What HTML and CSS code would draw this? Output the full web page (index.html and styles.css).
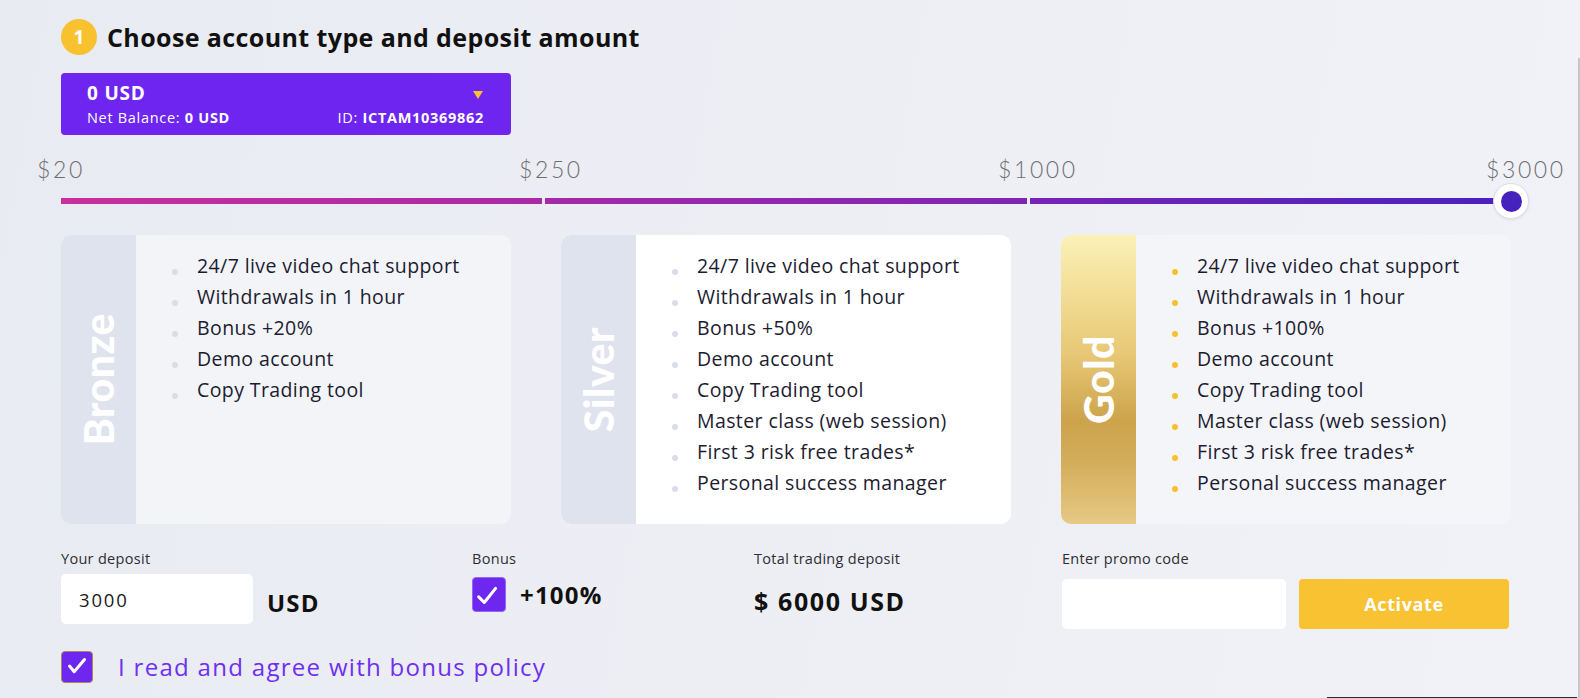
FILE: index.html
```html
<!DOCTYPE html>
<html lang="en">
<head>
<meta charset="utf-8">
<title>Choose account type and deposit amount</title>
<link rel="stylesheet" href="styles.css">
</head>
<body>
<div class="page">
  <div class="step">
    <span class="step-num">1</span>
    <h1 class="step-title">Choose account type and deposit amount</h1>
  </div>

  <div class="account">
    <div class="account-top">
      <span class="account-amount">0 USD</span>
      <span class="caret"></span>
    </div>
    <div class="account-bottom">
      <span>Net Balance: <b>0 USD</b></span>
      <span>ID: <b>ICTAM10369862</b></span>
    </div>
  </div>

  <div class="slider">
    <div class="slider-labels">
      <span>$20</span><span>$250</span><span>$1000</span><span>$3000</span>
    </div>
    <div class="track">
      <div class="seg seg1"></div>
      <div class="seg seg2"></div>
      <div class="seg seg3"></div>
      <div class="thumb"></div>
    </div>
  </div>

  <div class="cards">
    <div class="card card-bronze">
      <div class="band"><span class="band-label">Bronze</span></div>
      <ul class="features">
        <li>24/7 live video chat support</li>
        <li>Withdrawals in 1 hour</li>
        <li>Bonus +20%</li>
        <li>Demo account</li>
        <li>Copy Trading tool</li>
      </ul>
    </div>
    <div class="card card-silver">
      <div class="band"><span class="band-label">Silver</span></div>
      <ul class="features">
        <li>24/7 live video chat support</li>
        <li>Withdrawals in 1 hour</li>
        <li>Bonus +50%</li>
        <li>Demo account</li>
        <li>Copy Trading tool</li>
        <li>Master class (web session)</li>
        <li>First 3 risk free trades*</li>
        <li>Personal success manager</li>
      </ul>
    </div>
    <div class="card card-gold">
      <div class="band"><span class="band-label">Gold</span></div>
      <ul class="features">
        <li>24/7 live video chat support</li>
        <li>Withdrawals in 1 hour</li>
        <li>Bonus +100%</li>
        <li>Demo account</li>
        <li>Copy Trading tool</li>
        <li>Master class (web session)</li>
        <li>First 3 risk free trades*</li>
        <li>Personal success manager</li>
      </ul>
    </div>
  </div>

  <div class="form-row">
    <div class="field">
      <div class="field-label">Your deposit</div>
      <div class="deposit-row">
        <input class="text-input deposit-input" type="text" value="3000">
        <span class="unit">USD</span>
      </div>
    </div>
    <div class="field">
      <div class="field-label">Bonus</div>
      <div class="bonus-row">
        <span class="checkbox checkbox-bonus">
          <svg width="34" height="35" viewBox="0 0 34 35"><polyline points="6,20 12,26 24,11" fill="none" stroke="#fff" stroke-width="3.2" stroke-linecap="round" stroke-linejoin="round"/></svg>
        </span>
        <span class="bonus-value">+100%</span>
      </div>
    </div>
    <div class="field">
      <div class="field-label">Total trading deposit</div>
      <div class="total">$ 6000 USD</div>
    </div>
    <div class="field">
      <div class="field-label">Enter promo code</div>
      <div class="promo-row">
        <input class="text-input promo-input" type="text" value="">
        <button class="activate" type="button">Activate</button>
      </div>
    </div>
  </div>

  <div class="agree">
    <span class="checkbox checkbox-agree">
      <svg width="32" height="32" viewBox="0 0 32 32"><polyline points="8,15 13,21 24,8" fill="none" stroke="#fff" stroke-width="3.2" stroke-linecap="round" stroke-linejoin="round"/></svg>
    </span>
    <span class="agree-text">I read and agree with bonus policy</span>
  </div>
</div>
<div class="scrollbar"></div>
<div class="bottom-line"></div>
</body>
</html>
```

FILE: styles.css
```css
html, body {
  margin: 0;
  padding: 0;
}

body {
  width: 1580px;
  height: 698px;
  overflow: hidden;
  background: linear-gradient(100deg, #e9ebf2 0%, #eceef4 45%, #f1f2f7 100%);
  font-family: "Open Sans", "Noto Sans", sans-serif;
  color: #1c1c2e;
}

.page {
  width: 1450px;
  padding: 19px 0 0 61px;
}

/* header */
.step {
  display: flex;
  align-items: center;
  gap: 10px;
  height: 36px;
}

.step-num {
  width: 36px;
  height: 36px;
  border-radius: 50%;
  background: #f7c12f;
  color: #fff;
  font-weight: 700;
  font-size: 19px;
  display: flex;
  align-items: center;
  justify-content: center;
}

.step-title {
  margin: 0;
  font-size: 25px;
  font-weight: 700;
  color: #111;
  letter-spacing: 0.4px;
}

/* account box */
.account {
  margin-top: 18px;
  width: 450px;
  height: 62px;
  box-sizing: border-box;
  background: #6d25ef;
  border-radius: 4px;
  color: #fff;
  padding: 9px 27px 0 26px;
}

.account-top {
  display: flex;
  justify-content: space-between;
  align-items: center;
  height: 22px;
}

.account-amount {
  font-size: 19px;
  font-weight: 700;
  line-height: 22px;
  letter-spacing: 0.8px;
}

.caret {
  width: 0;
  height: 0;
  border-left: 5.5px solid transparent;
  border-right: 5.5px solid transparent;
  border-top: 8px solid #f7c12f;
  margin-top: 4px;
  margin-right: 1px;
}

.account-bottom {
  margin-top: 5px;
  display: flex;
  justify-content: space-between;
  font-size: 14.5px;
  line-height: 17px;
  letter-spacing: 0.7px;
}

.account-bottom b {
  font-weight: 700;
}

/* slider */
.slider {
  margin-top: 20px;
}

.slider-labels {
  display: grid;
  grid-template-columns: 484px 484px 481px 1px;
  font-family: Lato, "Open Sans", sans-serif;
  font-size: 23px;
  font-weight: 300;
  line-height: 28px;
  color: #6e6e72;
  letter-spacing: 2.6px;
}

.slider-labels span {
  margin-left: -24px;
  white-space: nowrap;
}

.slider-labels span:nth-child(2) { margin-left: -26px; }
.slider-labels span:nth-child(3) { margin-left: -31px; }

.track {
  position: relative;
  margin-top: 15px;
  display: flex;
  gap: 3px;
  height: 6px;
}

.seg {
  flex: 1;
}

.seg1 { background: linear-gradient(90deg, #c92f9d, #a92aa6); }
.seg2 { background: linear-gradient(90deg, #a42aa8, #7d25b5); }
.seg3 { background: linear-gradient(90deg, #7823b7, #4a21bf); }

.thumb {
  position: absolute;
  right: -18px;
  top: -15px;
  width: 36px;
  height: 36px;
  box-sizing: border-box;
  border-radius: 50%;
  background: #fff;
  border: 1px solid #dcdde6;
  box-shadow: 0 1px 3px rgba(0, 0, 0, 0.08);
  display: flex;
  align-items: center;
  justify-content: center;
}

.thumb::after {
  content: "";
  width: 21px;
  height: 21px;
  border-radius: 50%;
  background: #4522bd;
}

/* cards */
.cards {
  margin-top: 31px;
  display: grid;
  grid-template-columns: repeat(3, 450px);
  gap: 50px;
}

.card {
  display: flex;
  height: 289px;
  border-radius: 10px;
  overflow: hidden;
}

.card-bronze { background: #f2f4f8; }
.card-silver { background: #ffffff; }
.card-gold { background: #f4f5f9; }

.band {
  flex: none;
  width: 75px;
  background: #dfe3ee;
  display: flex;
  align-items: center;
  justify-content: center;
}

.card-gold .band {
  background: linear-gradient(180deg, #fbf1b8 0%, #f3e099 18%, #e6c774 42%, #cda34c 64%, #d2ad5a 78%, #e6c985 100%);
}

.band-label {
  writing-mode: vertical-rl;
  transform: rotate(180deg);
  font-family: Lato, "Open Sans", sans-serif;
  font-size: 41px;
  font-weight: 900;
  line-height: 1;
  color: #fff;
  letter-spacing: 0.5px;
}

.features {
  list-style: none;
  margin: 0;
  padding: 15px 0 0 35px;
}

.features li {
  display: flex;
  font-size: 19.5px;
  line-height: 31px;
  color: #1c1c30;
  white-space: nowrap;
  letter-spacing: 0.4px;
}

.features li::before {
  content: "";
  flex: none;
  width: 6px;
  height: 6px;
  border-radius: 50%;
  background: #d9dde8;
  margin: 19px 19px 0 1px;
}

.card-gold .features li::before {
  background: #f7c02e;
}

/* form row */
.form-row {
  margin-top: 25px;
  display: grid;
  grid-template-columns: 411px 282px 308px 449px;
}

.field-label {
  font-size: 14.5px;
  line-height: 19px;
  color: #2d2d33;
  letter-spacing: 0.3px;
}

.deposit-row {
  margin-top: 6px;
  display: flex;
  align-items: center;
}

.text-input {
  height: 50px;
  box-sizing: border-box;
  border: none;
  outline: none;
  background: #fff;
  border-radius: 5px;
  font-family: "Open Sans", "Noto Sans", sans-serif;
  font-size: 18.5px;
  color: #1a1a1a;
  margin: 0;
}

.deposit-input {
  width: 192px;
  padding: 0 0 0 18px;
  letter-spacing: 1.8px;
}

.unit {
  margin-left: 14px;
  margin-top: 7px;
  font-size: 24px;
  font-weight: 700;
  color: #111;
  letter-spacing: 1.2px;
}

.bonus-row {
  margin-top: 9px;
  display: flex;
  align-items: center;
}

.checkbox {
  flex: none;
  box-sizing: border-box;
  background: #6d27ee;
  border: 1px solid #9366f4;
  border-radius: 4px;
  display: flex;
  align-items: center;
  justify-content: center;
}

.checkbox svg {
  display: block;
}

.checkbox-bonus {
  width: 34px;
  height: 35px;
}

.bonus-value {
  margin-left: 14px;
  font-size: 24px;
  font-weight: 700;
  color: #111;
  letter-spacing: 1.2px;
}

.total {
  margin-top: 18px;
  font-size: 25px;
  font-weight: 700;
  line-height: 30px;
  color: #111;
  letter-spacing: 1.6px;
}

.promo-row {
  margin-top: 11px;
  display: flex;
  gap: 13px;
}

.promo-input {
  width: 224px;
  padding: 0 12px;
}

.activate {
  width: 210px;
  height: 50px;
  border: none;
  border-radius: 4px;
  background: #f8c232;
  color: #fff;
  font-family: "Open Sans", "Noto Sans", sans-serif;
  font-size: 18px;
  font-weight: 700;
  letter-spacing: 0.6px;
  padding: 0;
}

/* agree */
.agree {
  margin-top: 22px;
  display: flex;
  align-items: center;
}

.checkbox-agree {
  width: 32px;
  height: 32px;
  border-color: #a58a55;
}

.agree-text {
  margin-left: 25px;
  font-size: 24px;
  line-height: 30px;
  color: #6e2fef;
  letter-spacing: 1.3px;
}

/* browser chrome remnants */
.scrollbar {
  position: fixed;
  right: 0;
  top: 58px;
  bottom: 0;
  width: 2px;
  background: #c5c6cc;
}

.bottom-line {
  position: fixed;
  left: 1327px;
  width: 250px;
  bottom: 0;
  height: 1px;
  background: #2b2b33;
}
```
